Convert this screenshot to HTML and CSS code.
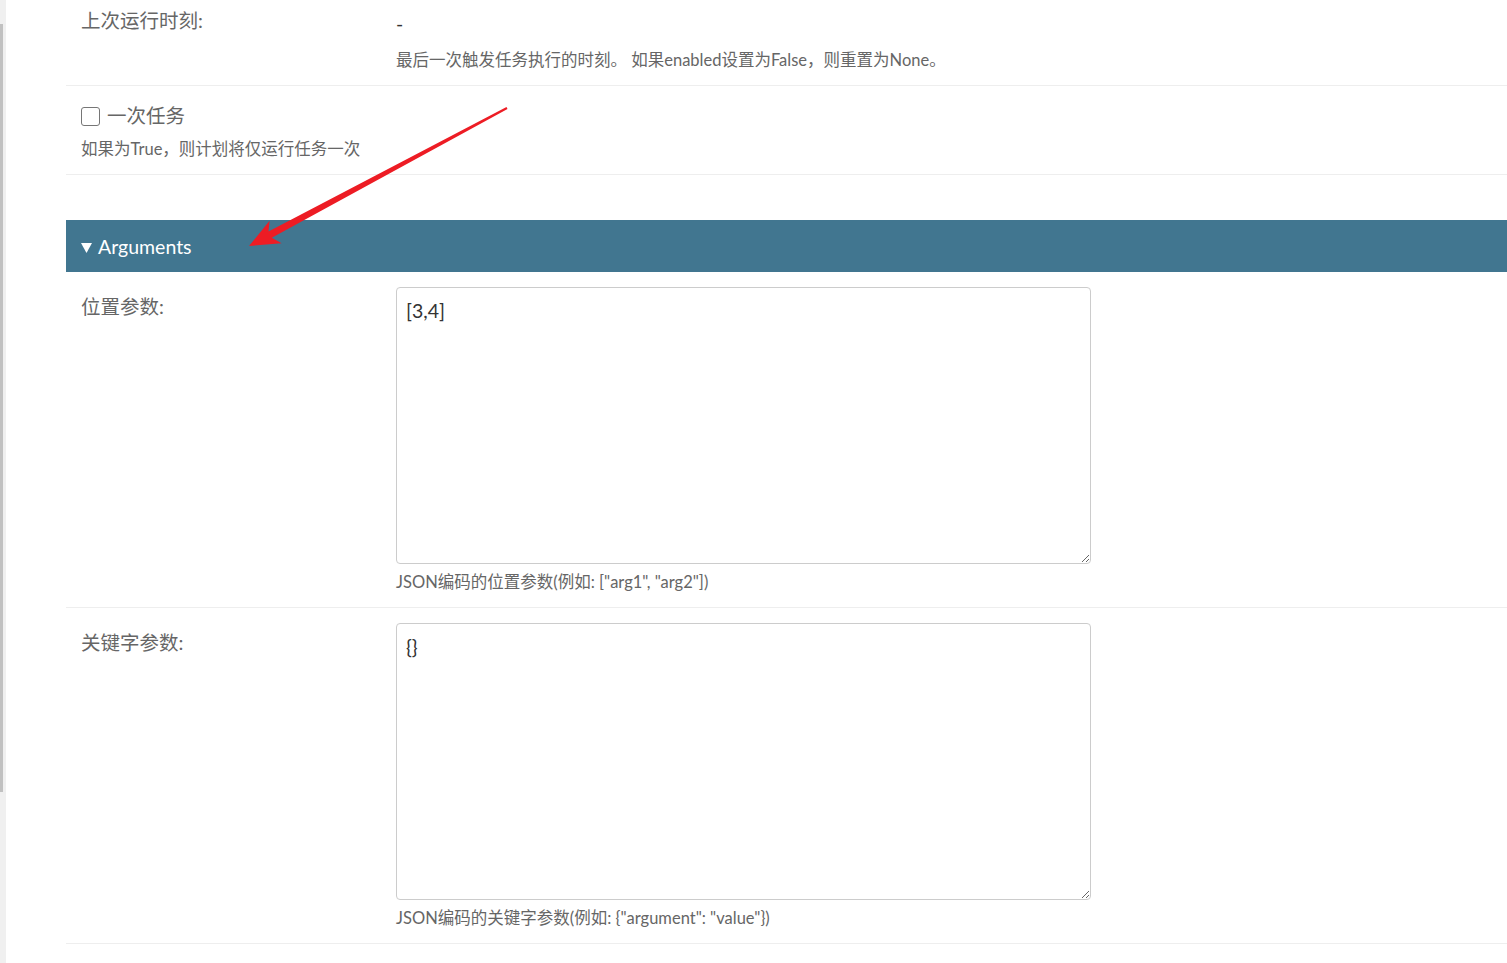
FILE: index.html
```html
<!DOCTYPE html>
<html lang="zh-CN">
<head>
<meta charset="utf-8">
<title>Periodic task</title>
<link rel="stylesheet" href="styles.css">
</head>
<body>
<div class="page">
  <div class="strip"><div class="thumb"></div></div>
  <main class="content">
    <fieldset class="module">
      <div class="row field">
        <div class="label">上次运行时刻:</div>
        <div class="field-body">
          <div class="value">-</div>
          <div class="help">最后一次触发任务执行的时刻。 如果enabled设置为False，则重置为None。</div>
        </div>
      </div>
      <div class="row">
        <div class="check-line">
          <input type="checkbox" class="checkbox" id="one_off">
          <label for="one_off" class="check-label">一次任务</label>
        </div>
        <div class="help">如果为True，则计划将仅运行任务一次</div>
      </div>
    </fieldset>

    <fieldset class="module collapse">
      <h2 class="module-title"><svg class="caret" width="11" height="10" viewBox="0 0 11 10"><polygon points="0,0 11,0 5.5,10" fill="#fff"/></svg><span class="title-text">Arguments</span></h2>
      <div class="row field">
        <div class="label">位置参数:</div>
        <div class="field-body">
          <textarea class="textarea">[3,4]</textarea>
          <div class="help">JSON编码的位置参数(例如: ["arg1", "arg2"])</div>
        </div>
      </div>
      <div class="row field">
        <div class="label">关键字参数:</div>
        <div class="field-body">
          <textarea class="textarea">{}</textarea>
          <div class="help">JSON编码的关键字参数(例如: {"argument": "value"})</div>
        </div>
      </div>
    </fieldset>
  </main>
</div>
<svg class="annotation" width="1507" height="963" viewBox="0 0 1507 963">
  <polygon points="249,246 269.6,220.8 268.5,231.6 506.5,107.1 507.5,108.9 271.8,237.8 281.6,243.3" fill="#ed1c24"/>
</svg>
</body>
</html>
```

FILE: styles.css
```css
html, body {
  margin: 0;
  padding: 0;
  height: 100%;
  overflow: hidden;
  background: #fff;
}

body {
  font-family: Lato, "Noto Sans CJK SC", sans-serif;
  color: #333;
}

.page {
  display: flex;
  height: 963px;
}

.strip {
  flex: none;
  width: 6px;
  background: #f0f0f0;
}

.thumb {
  width: 3px;
  height: 768px;
  margin-top: 24px;
  background: #c1c1c1;
}

.content {
  flex: 1;
  min-width: 0;
  padding-left: 60px;
  margin-top: -14px;
}

.module {
  border: 0;
  margin: 0;
  padding: 0;
  min-width: 0;
}

.module.collapse {
  margin-top: 45px;
}

.module-title {
  margin: 0;
  height: 52px;
  display: flex;
  align-items: center;
  padding: 0 15px;
  background: #417690;
  color: #fff;
  font-size: 19.5px;
  font-weight: normal;
}

.caret {
  flex: none;
  margin-top: 3px;
}

.title-text {
  margin-left: 6px;
}

.row {
  padding: 15px 0 14px 15px;
  border-bottom: 1px solid #eee;
}

.row.field {
  display: grid;
  grid-template-columns: 315px 1fr;
}

.label {
  font-size: 19.5px;
  line-height: 28px;
  padding-top: 6px;
  color: #666;
}

.value {
  font-size: 19.5px;
  line-height: 28px;
  padding: 9px 0 4px;
  color: #333;
}

.help {
  font-size: 16.5px;
  line-height: 22px;
  margin-top: 7px;
  color: #666;
}

.check-line {
  display: flex;
  align-items: center;
  height: 30px;
}

.checkbox {
  appearance: none;
  -webkit-appearance: none;
  margin: 0;
  width: 19px;
  height: 19px;
  border: 1.5px solid #767676;
  border-radius: 3px;
  background: #fff;
  box-sizing: border-box;
}

.check-label {
  margin-left: 7px;
  font-size: 19.5px;
  line-height: 30px;
  color: #666;
}

.textarea {
  display: block;
  box-sizing: border-box;
  width: 695px;
  height: 277px;
  margin: 0;
  padding: 9px 9px;
  border: 1px solid #ccc;
  border-radius: 4px;
  font-family: Lato, "Noto Sans CJK SC", sans-serif;
  font-size: 19.5px;
  line-height: 28px;
  color: #333;
  background: #fff;
  resize: vertical;
}

.annotation {
  position: absolute;
  top: 0;
  left: 0;
  pointer-events: none;
}
```
